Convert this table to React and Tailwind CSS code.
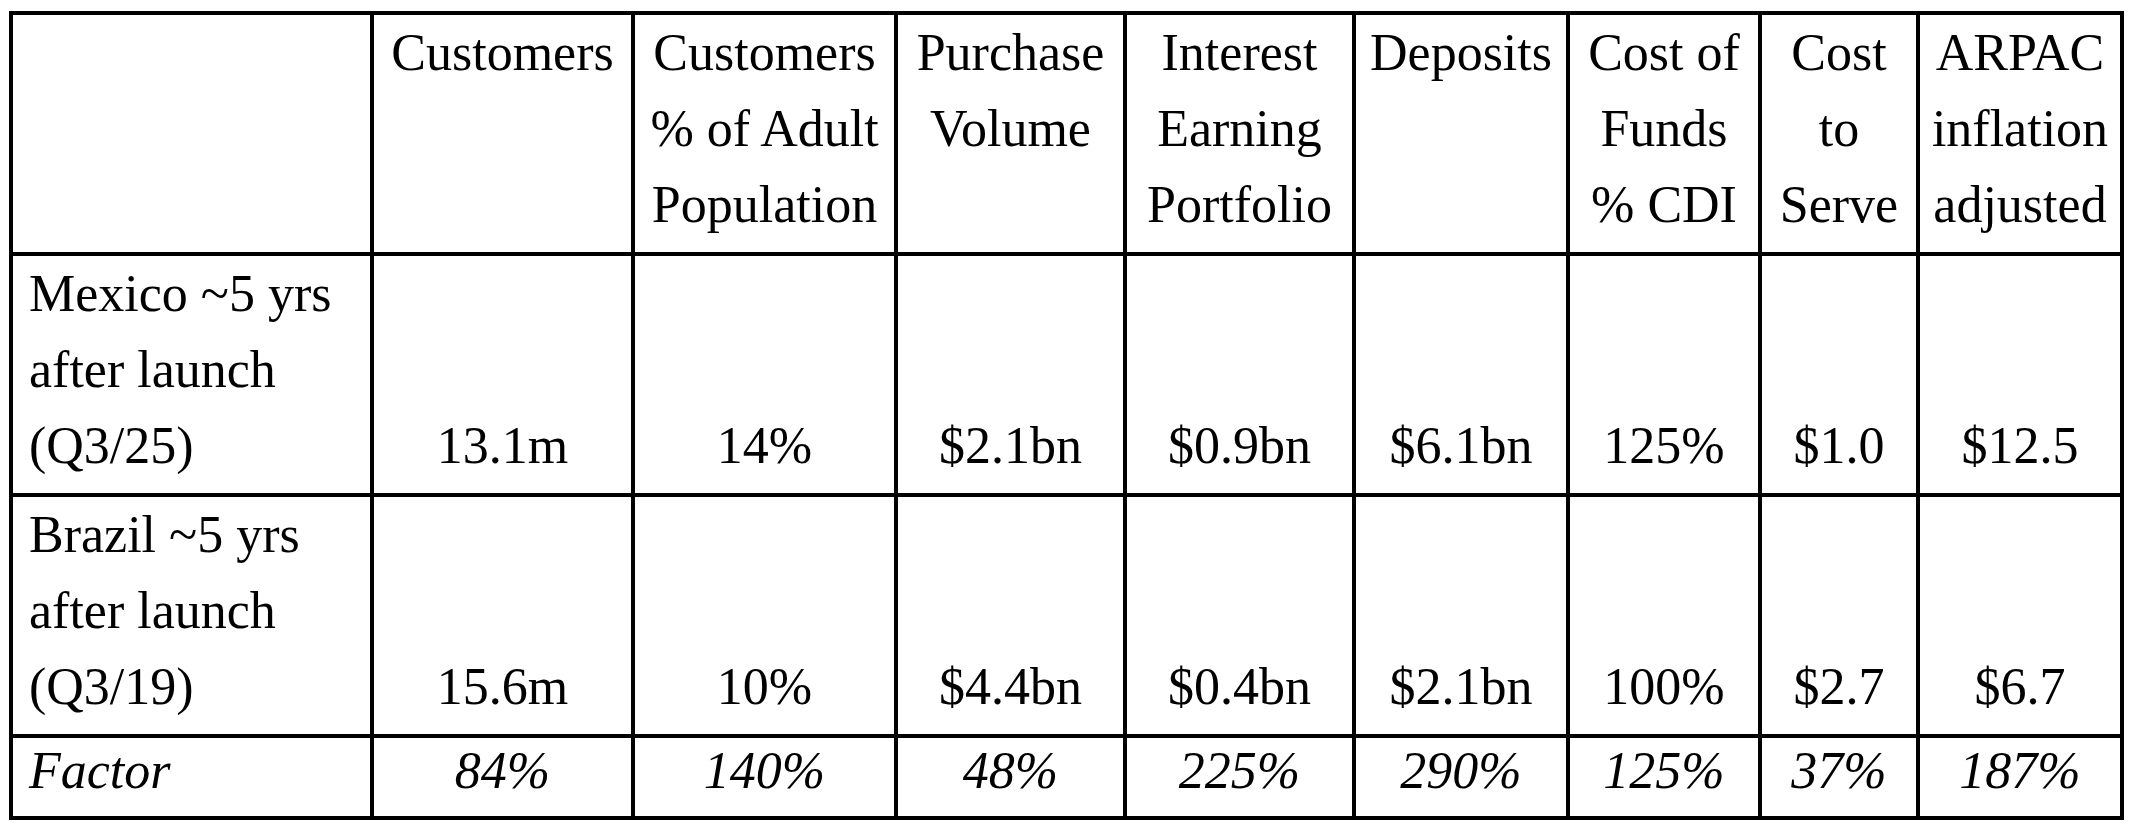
export default function App() {
  const headers = [
    ["Customers"],
    ["Customers", "% of Adult", "Population"],
    ["Purchase", "Volume"],
    ["Interest", "Earning", "Portfolio"],
    ["Deposits"],
    ["Cost of", "Funds", "% CDI"],
    ["Cost", "to", "Serve"],
    ["ARPAC", "inflation", "adjusted"],
  ];
  const rows = [
    {
      label: ["Mexico ~5 yrs", "after launch", "(Q3/25)"],
      values: ["13.1m", "14%", "$2.1bn", "$0.9bn", "$6.1bn", "125%", "$1.0", "$12.5"],
    },
    {
      label: ["Brazil ~5 yrs", "after launch", "(Q3/19)"],
      values: ["15.6m", "10%", "$4.4bn", "$0.4bn", "$2.1bn", "100%", "$2.7", "$6.7"],
    },
  ];
  const factor = ["84%", "140%", "48%", "225%", "290%", "125%", "37%", "187%"];
  const widths = [361, 261, 263, 229, 229, 214, 192, 158, 204];

  const lines = (arr) =>
    arr.map((t, i) => (
      <span key={i} className="block whitespace-nowrap">
        {t}
      </span>
    ));

  return (
    <div className="min-h-screen w-full bg-white pt-[11px] pl-[9px]" style={{ fontFamily: '"Liberation Serif", "Times New Roman", serif' }}>
      <table className="table-fixed border-collapse border-[4px] border-black text-black text-[52px] leading-[76px]" style={{ width: widths.reduce((a, b) => a + b, 0) + 4 }}>
        <colgroup>
          {widths.map((w, i) => (
            <col key={i} style={{ width: w }} />
          ))}
        </colgroup>
        <tbody>
          <tr>
            <td className="border-[4px] border-black p-0 pb-[9px] align-top"></td>
            {headers.map((h, i) => (
              <td key={i} className="border-[4px] border-black p-0 pb-[9px] align-top text-center font-normal">
                {lines(h)}
              </td>
            ))}
          </tr>
          {rows.map((r, ri) => (
            <tr key={ri}>
              <td className="border-[4px] border-black p-0 pl-[16px] pb-[9px] align-top text-left">
                {lines(r.label)}
              </td>
              {r.values.map((v, i) => (
                <td key={i} className="border-[4px] border-black p-0 pb-[9px] align-bottom text-center whitespace-nowrap">
                  {v}
                </td>
              ))}
            </tr>
          ))}
          <tr className="italic leading-[66px]">
            <td className="border-[4px] border-black p-0 pl-[16px] pb-[12px] align-bottom text-left">Factor</td>
            {factor.map((v, i) => (
              <td key={i} className="border-[4px] border-black p-0 pb-[12px] align-bottom text-center whitespace-nowrap">
                {v}
              </td>
            ))}
          </tr>
        </tbody>
      </table>
    </div>
  );
}
